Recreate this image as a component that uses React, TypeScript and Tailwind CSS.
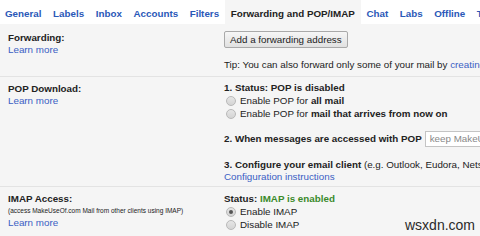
import React from 'react'

const tabs = ['General', 'Labels', 'Inbox', 'Accounts', 'Filters', 'Forwarding and POP/IMAP', 'Chat', 'Labs', 'Offline', 'Themes']

function Radio({ checked = false }: { checked?: boolean }) {
  return (
    <span className="mr-[4px] inline-flex h-[10px] w-[10px] shrink-0 items-center justify-center rounded-full border border-[#b9b9b9] bg-gradient-to-b from-[#e6e6e6] to-[#d4d4d4]">
      {checked && <span className="h-[4px] w-[4px] rounded-full bg-[#555]" />}
    </span>
  )
}

export default function App() {
  return (
    <div className="relative h-[236px] w-[480px] overflow-hidden bg-[#f5f5f5] text-[9.8px] leading-[12px] text-[#222] font-['Liberation_Sans',Arial,sans-serif]">
      {/* tab bar */}
      <div className="flex h-[24px] bg-white whitespace-nowrap">
        {tabs.map((t) => (
          <div
            key={t}
            className={`flex items-center px-[5.8px] pt-[4px] font-bold first:pl-[5px] ${
              t === 'Forwarding and POP/IMAP' ? 'bg-[#f5f5f5] text-[#222]' : 'text-[#2a58b8]'
            }`}
          >
            {t}
          </div>
        ))}
      </div>

      {/* Forwarding */}
      <div className="flex h-[53px] border-b border-[#e3e3e3] pt-[7px]">
        <div className="w-[224px] shrink-0 pl-[8px]">
          <div className="mt-[1px] font-bold">Forwarding:</div>
          <div className="text-[#3a60c4]">Learn more</div>
        </div>
        <div className="whitespace-nowrap">
          <button className="h-[17px] rounded-[2px] border border-[#a9a9a9] bg-gradient-to-b from-[#f6f6f6] to-[#e1e1e1] px-[5px] text-[9.8px] leading-[12px] text-[#222]">
            Add a forwarding address
          </button>
          <div className="mt-[11px]">
            Tip: You can also forward only some of your mail by <span className="text-[#3a60c4]">creating a filter!</span>
          </div>
        </div>
      </div>

      {/* POP */}
      <div className="flex h-[110px] border-b border-[#e3e3e3] pt-[5px]">
        <div className="w-[224px] shrink-0 pl-[8px]">
          <div className="mt-[1px] font-bold">POP Download:</div>
          <div className="text-[#3a60c4]">Learn more</div>
        </div>
        <div className="whitespace-nowrap">
          <div className="font-bold">1. Status: POP is disabled</div>
          <div className="mt-[1px] flex items-center pl-[2px]">
            <Radio />
            Enable POP for <b className="ml-[3px]">all mail</b>
          </div>
          <div className="mt-[1px] flex items-center pl-[2px]">
            <Radio />
            Enable POP for <b className="ml-[3px]">mail that arrives from now on</b>
          </div>
          <div className="mt-[11px] flex items-center">
            <b>2. When messages are accessed with POP</b>
            <span className="ml-[3px] flex h-[16px] w-[80px] items-center border border-[#c4c4c4] bg-white px-[4px] text-[#888]">
              keep MakeUseOf.com Mail's copy in the Inbox
            </span>
          </div>
          <div className="mt-[12px]">
            <b>3. Configure your email client</b> (e.g. Outlook, Eudora, Netscape Mail)
          </div>
          <div className="text-[#3a60c4]">Configuration instructions</div>
        </div>
      </div>

      {/* IMAP */}
      <div className="flex pt-[6px]">
        <div className="w-[224px] shrink-0 pl-[8px]">
          <div className="font-bold">IMAP Access:</div>
          <div className="mt-[1px] text-[6.5px] leading-[10px]">(access MakeUseOf.com Mail from other clients using IMAP)</div>
          <div className="mt-[1px] text-[#3a60c4]">Learn more</div>
        </div>
        <div className="whitespace-nowrap">
          <div className="font-bold">
            Status: <span className="text-[#3a8a2a]">IMAP is enabled</span>
          </div>
          <div className="mt-[1px] flex items-center pl-[2px]">
            <Radio checked />
            Enable IMAP
          </div>
          <div className="mt-[1px] flex items-center pl-[2px]">
            <Radio />
            Disable IMAP
          </div>
        </div>
      </div>

      <div className="absolute left-[405px] top-[216px] text-[14px] leading-[18px] text-[#2a2a2a]">wsxdn.com</div>
    </div>
  )
}
